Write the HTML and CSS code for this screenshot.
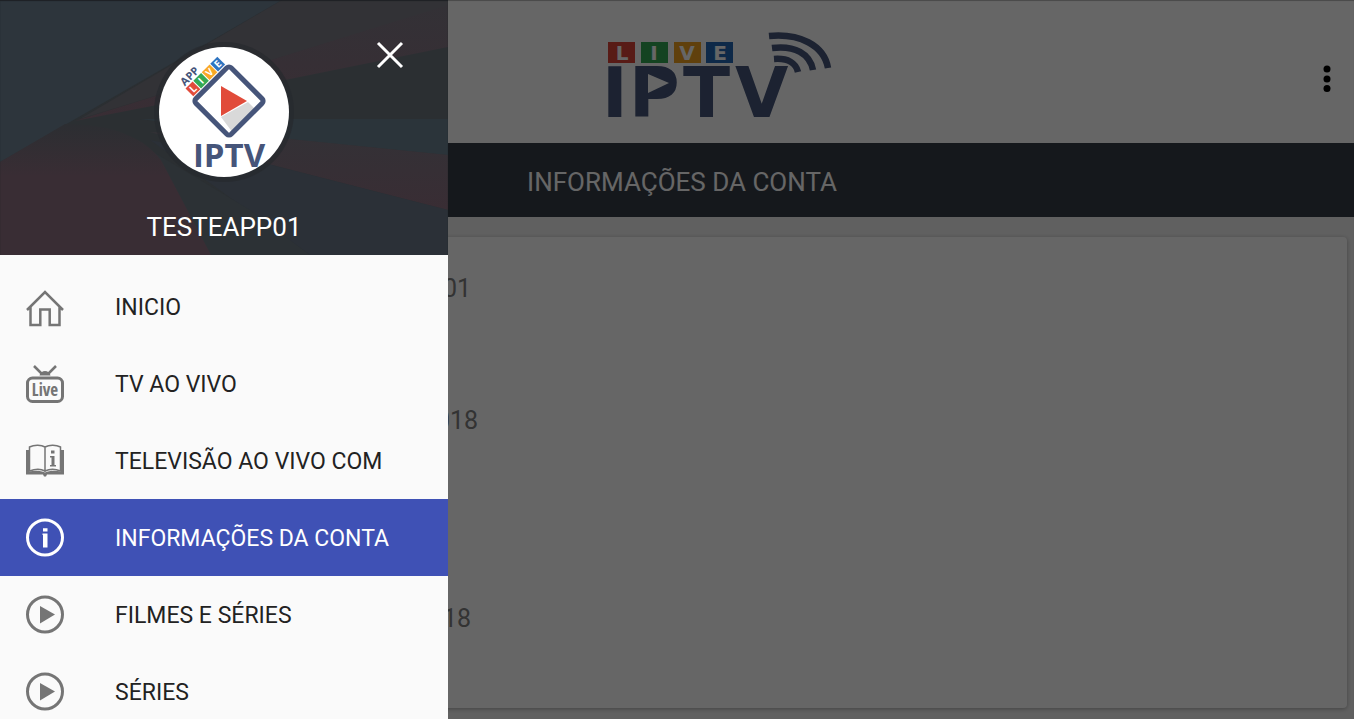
FILE: index.html
```html
<!DOCTYPE html>
<html lang="pt">
<head>
<meta charset="UTF-8">
<meta name="viewport" content="width=device-width, initial-scale=1">
<title>Live IPTV</title>
<link rel="stylesheet" href="styles.css">
</head>
<body>

<div class="app">
    <header class="toolbar">
        <svg class="logo" viewBox="0 0 226 90" role="img" aria-label="Live IPTV">
            <rect x="1" y="12" width="27" height="21" fill="#db4437"/>
            <rect x="34" y="12" width="27" height="21" fill="#34a853"/>
            <rect x="67" y="12" width="27" height="21" fill="#f0a020"/>
            <rect x="99" y="12" width="27" height="21" fill="#2468b4"/>
            <g class="logo-live">
                <text x="15" y="30">L</text>
                <text x="47" y="30">I</text>
                <text x="80" y="30">V</text>
                <text x="113" y="30">E</text>
            </g>
            <text class="logo-iptv" x="-5 22 76 128" y="87">IPTV</text>
            <path d="M39 43h17l6 4v14l-6 7H39z" fill="#46557a"/>
            <path d="M41 44l21 9-21 10z" fill="#fff"/>
            <g fill="none" stroke="#46557a" stroke-width="6.500">
                <path d="M162 6c30-3 55 9 59 32"/>
                <path d="M165 18c23-3 38 6 41 22"/>
                <path d="M167 29c14-1 22 4 24 13"/>
            </g>
        </svg>
        <button class="more" aria-label="Mais">
            <svg viewBox="0 0 8 28"><circle cx="4" cy="4" r="3.5"/><circle cx="4" cy="14" r="3.5"/><circle cx="4" cy="23.500" r="3.5"/></svg>
        </button>
    </header>
    <h1 class="page-title">INFORMAÇÕES DA CONTA</h1>
    <main class="content">
        <ul class="card">
            <li class="user">01</li>
            <li class="expires">018</li>
            <li class="created">18</li>
        </ul>
    </main>
</div>

<div class="scrim"></div>

<aside class="drawer">
    <div class="profile">
        <svg class="profile-bg" viewBox="0 0 448 255" preserveAspectRatio="none" aria-hidden="true">
            <defs>
                <linearGradient id="glow" x1="0" y1="0" x2="0" y2="1">
                    <stop offset="0" stop-color="#2c2e32"/>
                    <stop offset=".4" stop-color="#392d34"/>
                </linearGradient>
                <linearGradient id="ray" x1="0" y1="0" x2="0" y2="1">
                    <stop offset="0" stop-color="#333136"/>
                    <stop offset="1" stop-color="#392d34"/>
                </linearGradient>
            </defs>
            <rect width="448" height="255" fill="#2b2f32"/>
            <path d="M0 0h282L70 122 0 162z" fill="#2d353c"/>
            <path d="M282 0h166v6L80 119z" fill="#323236"/>
            <path d="M448 5v42L290 79 75 121z" fill="url(#ray)"/>
            <path d="M140 119h308v36l-160-16z" fill="#2b343a"/>
            <path d="M150 132l140 7 158 16v55l-180-46z" fill="url(#ray)"/>
            <path d="M150 140l118 24 180 46v45H310z" fill="#2b3037"/>
            <path d="M150 150l100 60 60 45H210z" fill="#2c3135"/>
            <path d="M0 162l65-38c50 0 80 15 96 36l50 95H0z" fill="url(#glow)"/>
        </svg>
        <button class="close" aria-label="Fechar">
            <svg viewBox="0 0 28 28"><path d="M2 2l24 24M26 2L2 26"/></svg>
        </button>
        <svg class="avatar" viewBox="0 0 142 142" role="img" aria-label="App Live IPTV">
            <circle cx="71" cy="71" r="70" fill="#26292d" opacity=".7"/>
            <circle cx="71" cy="71" r="65" fill="#fff"/>
            <path d="M68 76l27-15 9 9-24 22z" fill="#d9d9d9"/>
            <rect x="51" y="35" width="50" height="50" rx="3" fill="none" stroke="#46557a" stroke-width="5" transform="rotate(45 76 60)"/>
            <path d="M68 45l26 15-26 15z" fill="#e14b3a"/>
            <g transform="translate(41 56) rotate(-45)">
                <rect x="0" y="-12" width="10" height="11" fill="#e14b3a"/>
                <rect x="11" y="-12" width="11" height="11" fill="#34a853"/>
                <rect x="23" y="-12" width="11" height="11" fill="#f9a825"/>
                <rect x="35" y="-12" width="10" height="11" fill="#2f74c0"/>
                <g class="avatar-live">
                    <text x="5" y="-3">L</text>
                    <text x="16.500" y="-3">I</text>
                    <text x="28.500" y="-3">V</text>
                    <text x="40" y="-3">E</text>
                </g>
                <text class="avatar-app" x="1" y="-14">APP</text>
            </g>
            <text class="avatar-iptv" x="76" y="126">IPTV</text>
        </svg>
        <div class="username">TESTEAPP01</div>
    </div>

    <nav class="menu">
        <a href="#inicio">
            <svg viewBox="0 0 40 40"><path class="line" d="M2 23L20 5l18 18M5.500 20v18h9.800V22.500h9.400V38h9.800V20"/></svg>
            INICIO
        </a>
        <a href="#tv">
            <svg viewBox="0 0 40 40">
                <path class="line" d="M9 2l8 8M31 2l-8 8"/>
                <path d="M14.500 11.500c1-6 10-6 11 0z"/>
                <rect class="thick" x="2.500" y="14" width="35" height="23.500" rx="5"/>
                <text x="20" y="32">Live</text>
            </svg>
            TV AO VIVO
        </a>
        <a href="#guia">
            <svg viewBox="0 0 40 40">
                <path class="thin" d="M4.500 30V6c5-2.500 12-2 15.500 0 4-2 10.500-2.500 15.500 0v24c-5-2-11-2-15.500 0-4-2-10-2-15.500 0zM20 6v25"/>
                <path d="M1 9h3v21.500c5-1 12-1 16 1 4-2 11-2 16-1V9h3v24.500H22l-1 2h-2l-1-2H1z"/>
                <path d="M26 9.500h3.500v3H26zM25 15h4.500v9H31v1.500h-6V24h1.500v-7.500H25z"/>
            </svg>
            TELEVISÃO AO VIVO COM
        </a>
        <a href="#conta" class="active">
            <svg viewBox="0 0 40 40">
                <circle class="thick" cx="20" cy="19.500" r="17.500"/>
                <path d="M18 10.200h4.500v3.200H18zM17.500 15.500h5v14H18V17h-.5z"/>
            </svg>
            INFORMAÇÕES DA CONTA
        </a>
        <a href="#filmes">
            <svg viewBox="0 0 40 40"><circle class="thick" cx="20" cy="19.500" r="17.500"/><path d="M15 11L30 19.500l-15 9z"/></svg>
            FILMES E SÉRIES
        </a>
        <a href="#series">
            <svg viewBox="0 0 40 40"><circle class="thick" cx="20" cy="19.500" r="17.500"/><path d="M15 11L30 19.500l-15 9z"/></svg>
            SÉRIES
        </a>
    </nav>
</aside>

</body>
</html>
```
FILE: styles.css
```css
* {
    box-sizing: border-box;
}

body {
    margin: 0;
    font-family: Roboto, "Liberation Sans", sans-serif;
    font-size: 23px;
    overflow: hidden;
}

button {
    padding: 0;
    border: none;
    background: none;
    cursor: pointer;
}

.app {
    display: flex;
    flex-direction: column;
    min-height: 100vh;
    background: #f0f0f0;
}

.toolbar {
    display: flex;
    align-items: center;
    padding: 30px 10px 23px 130px;
    background: #fff;
}

.logo {
    width: 226px;
    height: 90px;
    margin: 0 auto;
    overflow: visible;
}

.logo-live {
    fill: #fff;
    font: bold 20px "DejaVu Sans", sans-serif;
    text-anchor: middle;
}

.logo-iptv {
    fill: #46557a;
    font: bold 69px "DejaVu Sans", sans-serif;
}

.more {
    width: 34px;
    padding-top: 10px;
}

.more svg {
    width: 8px;
    height: 28px;
}

.page-title {
    margin: 0;
    padding: 4px 0 0 10px;
    line-height: 70px;
    background: #353c46;
    color: #fff;
    font-size: 26px;
    font-weight: 400;
    text-align: center;
}

.content {
    display: flex;
    flex: 1;
    padding: 20px 7px 11px;
}

.card {
    display: grid;
    flex: 1;
    grid-auto-rows: 66px;
    grid-template-columns: 100px;
    align-items: center;
    margin: 0;
    padding: 18px 0 16px 400px;
    border-radius: 4px;
    background: #fff;
    box-shadow: 0 1px 4px rgba(0, 0, 0, 0.3);
    color: #7f7f7f;
    font-size: 25px;
    list-style: none;
    text-align: center;
}

.expires {
    grid-row: 3;
}

.created {
    grid-row: 6;
}

.scrim {
    position: fixed;
    inset: 0;
    background: rgba(0, 0, 0, 0.6);
    box-shadow: inset 0 1px 1px rgba(0, 0, 0, 0.3);
}

/* Drawer lies over the dimmed page */
.drawer {
    position: fixed;
    top: 0;
    bottom: 0;
    left: 0;
    width: 448px;
    overflow: hidden;
    background: #fafafa;
}

.profile {
    position: relative;
    display: flex;
    flex-direction: column;
    align-items: center;
    padding-top: 41px;
    height: 255px;
    box-shadow: inset 0 1px 1px #1d2024;
    color: #fff;
}

.profile-bg {
    position: absolute;
    inset: 0;
    z-index: -1;
    width: 100%;
    height: 100%;
}

.close {
    position: absolute;
    top: 41px;
    right: 44px;
    width: 28px;
    height: 28px;
}

.close svg {
    display: block;
    fill: none;
    stroke: #fff;
    stroke-width: 3;
}

.avatar {
    width: 142px;
    height: 142px;
}

.avatar-live {
    fill: #fff;
    font: bold 10px "Open Sans", sans-serif;
    text-anchor: middle;
}

.avatar-app {
    fill: #46557a;
    font: bold 11px "Open Sans", sans-serif;
}

.avatar-iptv {
    fill: #46557a;
    font: bold 33px "Open Sans", sans-serif;
    text-anchor: middle;
}

.username {
    margin-top: 28px;
    line-height: 32px;
    font-size: 26px;
}

.menu {
    padding-top: 13px;
}

.menu a {
    display: flex;
    align-items: center;
    gap: 50px;
    height: 77px;
    padding: 1px 0 0 25px;
    color: #222;
    text-decoration: none;
    white-space: nowrap;
}

.menu a.active {
    background: #3f51b5;
    color: #fff;
}

.menu svg {
    width: 40px;
    height: 40px;
    fill: #757575;
    stroke: none;
}

.menu .active svg {
    fill: #fff;
}

.menu .line,
.menu .thick,
.menu .thin {
    fill: none;
    stroke: #757575;
    stroke-width: 2.5;
}

.menu .thick {
    stroke-width: 3;
}

.menu .thin {
    stroke-width: 1.5;
}

.menu .active .thick {
    stroke: #fff;
}

.menu text {
    font: bold 17px "Liberation Sans Narrow", "Open Sans Condensed", "Liberation Sans", sans-serif;
    text-anchor: middle;
}
```
